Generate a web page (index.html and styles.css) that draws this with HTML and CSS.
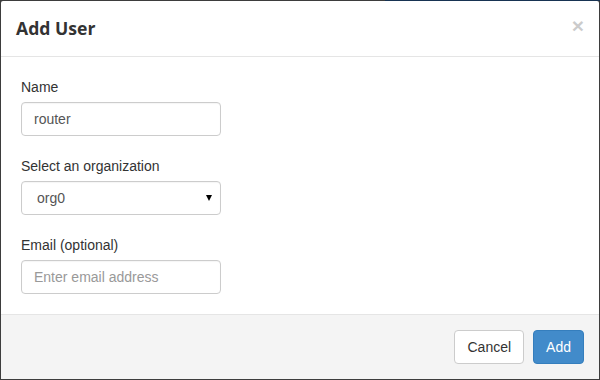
FILE: index.html
```html
<!DOCTYPE html>
<html lang="en">
<head>
  <meta charset="UTF-8" />
  <meta name="viewport" content="width=device-width, initial-scale=1.0" />
  <title>Add User</title>
  <link rel="stylesheet" href="styles.css">
</head>
<body>

  <!-- modal -->
  <div class="modal">
    <div class="modal-header">
      <h4 class="modal-title">Add User</h4>
      <button class="close" type="button">&times;</button>
    </div>

    <div class="modal-body">
      <div class="form-group">
        <label for="userName">Name</label>
        <input id="userName" class="form-control" type="text" value="router" />
      </div>

      <div class="form-group">
        <label for="userOrg">Select an organization</label>
        <div class="select-wrap">
          <select id="userOrg" class="form-control">
            <option>org0</option>
            <option>org1</option>
          </select>
        </div>
      </div>

      <div class="form-group last">
        <label for="userEmail">Email (optional)</label>
        <input id="userEmail" class="form-control" type="email" placeholder="Enter email address" />
      </div>
    </div>

    <div class="modal-footer">
      <button class="btn btn-default" type="button">Cancel</button>
      <button class="btn btn-primary" type="button">Add</button>
    </div>
  </div>

</body>
</html>
```

FILE: styles.css
```css
/* ===== base ===== */
*{box-sizing:border-box}
html,body{height:100%}
body{
  margin:0;
  padding:1px 1px 0 1px;
  font-family:"Liberation Sans",Arial,sans-serif;
  font-size:14px;
  line-height:20px;
  color:#333;
  background:linear-gradient(to right,#3d3d3d 385px,#173352 385px) top left/100% 1px no-repeat,#3d3d3d;
  overflow:hidden;
}

/* ===== modal ===== */
.modal{
  background:#fff;
  border-radius:2px 2px 0 0;
  overflow:hidden;
}
.modal-header{
  display:flex;
  align-items:center;
  justify-content:space-between;
  padding:14px 15px 15px;
  border-bottom:1px solid #e5e5e5;
}
.modal-title{
  margin:0;
  font-family:"Open Sans",sans-serif;
  font-size:17.6px;
  font-weight:700;
  line-height:26px;
  color:#333;
}
.close{
  padding:0;
  border:none;
  background:transparent;
  font-family:"Liberation Sans",Arial,sans-serif;
  font-size:21px;
  font-weight:700;
  line-height:1;
  color:#000;
  opacity:.2;
  margin-top:-6px;
  cursor:pointer;
}

/* ===== form ===== */
.modal-body{padding:20px}
.form-group{margin-bottom:20px}
.form-group.last{margin-bottom:0}
label{
  display:block;
  margin-bottom:5px;
}
.form-control{
  display:block;
  width:200px;
  height:34px;
  padding:6px 12px;
  font-family:"Liberation Sans",Arial,sans-serif;
  font-size:14px;
  color:#555;
  background:#fff;
  border:1px solid #ccc;
  border-radius:4px;
  box-shadow:inset 0 1px 1px rgba(0,0,0,.04);
}
.form-control::placeholder{color:#999}

.select-wrap{
  position:relative;
  width:200px;
}
.select-wrap select{
  appearance:none;
  -webkit-appearance:none;
  padding-left:15px;
}
.select-wrap::after{
  content:"";
  position:absolute;
  right:9px;
  top:14px;
  border-left:3.5px solid transparent;
  border-right:3.5px solid transparent;
  border-top:6px solid #000;
  pointer-events:none;
}

/* ===== footer ===== */
.modal-footer{
  display:flex;
  justify-content:flex-end;
  gap:9px;
  padding:15px;
  background:#f4f4f4;
  border-top:1px solid #e5e5e5;
}
.btn{
  height:34px;
  padding:6px 12px;
  font-family:"Liberation Sans",Arial,sans-serif;
  font-size:14px;
  line-height:20px;
  border:1px solid transparent;
  border-radius:4px;
  cursor:pointer;
}
.btn-default{
  background:#fff;
  color:#333;
  border-color:#ccc;
}
.btn-primary{
  background:#428bca;
  color:#fff;
  border-color:#357ebd;
}
```
